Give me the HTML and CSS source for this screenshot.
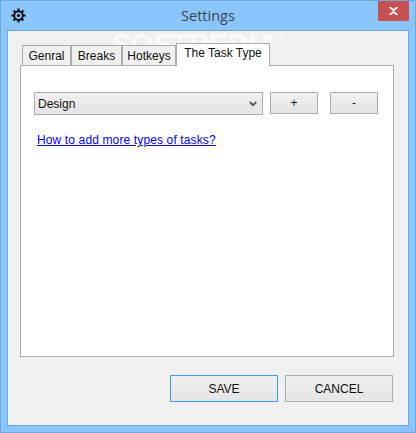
FILE: index.html
```html
<!DOCTYPE html>
<html lang="en">
<head>
<meta charset="utf-8">
<title>Settings</title>
<link rel="stylesheet" href="styles.css">
</head>
<body>
<div class="window">
  <header class="titlebar">
    <svg class="app-icon" viewBox="0 0 16 16" width="15" height="15" aria-hidden="true">
      <g stroke="#0c0c14" stroke-width="2.2">
        <path d="M8 .5V15.5M.5 8H15.5M2.7 2.7 13.3 13.3M13.3 2.7 2.7 13.3"/>
      </g>
      <circle cx="8" cy="8" r="4.6" fill="#8ac6fb" stroke="#0c0c14" stroke-width="2"/>
      <circle cx="8" cy="8" r="1.7" fill="#0c0c14"/>
    </svg>
    <div class="title">Settings</div>
    <div class="close">
      <svg viewBox="0 0 9 8" width="9" height="8" aria-hidden="true"><path d="M.5 0 4.5 3.2 8.5 0M.5 8 4.5 4.8 8.5 8" stroke="#fff" stroke-width="1.8" fill="none"/></svg>
    </div>
  </header>
  <main class="client">
    <div class="watermark"><span>SOFTPEDIA</span><sup class="reg">®</sup></div>
    <nav class="tabs">
      <div class="tab t1">Genral</div>
      <div class="tab t2">Breaks</div>
      <div class="tab t3">Hotkeys</div>
      <div class="tab active">The Task Type</div>
    </nav>
    <section class="panel">
      <div class="row">
        <div class="select">
          <span>Design</span>
          <svg viewBox="0 0 8 6" width="8" height="6" aria-hidden="true"><path d="M.8 1 4 4.2 7.2 1" stroke="#555" stroke-width="1.8" fill="none"/></svg>
        </div>
        <div class="btn small">+</div>
        <div class="btn small minus">-</div>
      </div>
      <a class="link" href="#">How to add more types of tasks?</a>
    </section>
    <footer class="actions">
      <div class="btn large focus">SAVE</div>
      <div class="btn large">CANCEL</div>
    </footer>
  </main>
</div>
</body>
</html>
```
FILE: styles.css
```css
* { box-sizing: border-box; }
html, body { margin: 0; padding: 0; }
body { width: 416px; height: 433px; overflow: hidden; font-family: "Liberation Sans", Arial, sans-serif; }
.window {
  width: 416px; height: 433px;
  background: #8ac6fb;
  border: 1px solid #6fa8dc;
  display: flex; flex-direction: column;
  padding: 0 6px 6px;
}
.titlebar { height: 29px; flex: none; display: flex; align-items: flex-start; position: relative; }
.app-icon { position: absolute; left: 4px; top: 7px; }
.title { flex: 1; text-align: center; font-size: 14.5px; line-height: 17px; margin-top: 6px; color: #3a4552; font-family: "Open Sans", "Liberation Sans", sans-serif; }
.close {
  position: absolute; right: 0; top: 0; width: 31px; height: 20px;
  background: #c75050; display: flex; align-items: center; justify-content: center;
}
.client {
  flex: 1; background: #f0f0f0; border: 1px solid #6fa8dc; position: relative;
  padding: 12px 14px 0 12px; display: flex; flex-direction: column;
}
.watermark {
  position: absolute; left: 104px; top: 0; width: 180px; height: 14px; overflow: hidden;
  font-size: 29px; line-height: 26px; font-weight: 700; color: #fff; opacity: .7; white-space: nowrap;
}
.reg { font-size: 10px; line-height: 10px; font-weight: 400; vertical-align: top; }
.tabs { display: flex; align-items: flex-end; height: 22px; flex: none; position: relative; padding-left: 2px; }
.tab {
  height: 20px; text-align: center; font-size: 12px; line-height: 21px; color: #111;
  background: #f0f0f0; border: 1px solid #acacac; border-bottom: 0; white-space: nowrap;
}
.t1 { width: 49px; }
.t2 { width: 51px; }
.t3 { width: 54px; }
.tab.active {
  width: 94px; height: 23px; background: #fff; margin-bottom: -1px; line-height: 19px; position: relative;
}
.panel {
  height: 292px; flex: none; background: #fff; border: 1px solid #acacac;
  padding: 26px 14px 0 13px;
}
.row { display: flex; align-items: flex-start; height: 23px; }
.select {
  width: 229px; height: 23px; border: 1px solid #acacac;
  background: linear-gradient(#f0f0f0, #e5e5e5);
  display: flex; align-items: center; justify-content: space-between; padding: 0 5px 0 3px;
  font-size: 12px; color: #111;
}
.btn {
  border: 1px solid #acacac; background: linear-gradient(#f0f0f0, #e5e5e5);
  display: flex; align-items: center; justify-content: center; font-size: 12px; color: #111;
}
.btn.small { width: 48px; height: 22px; margin-left: 7px; }
.btn.small.minus { margin-left: 12px; }
.link { display: block; margin: 18px 0 0 3px; font-size: 12px; line-height: 14px; letter-spacing: .13px; color: #0000ff; text-decoration: underline; }
.actions { display: flex; justify-content: flex-end; gap: 7px; margin-top: 18px; padding-right: 1px; }
.btn.large { width: 108px; height: 27px; }
.btn.focus { border-color: #3e9af0; }
```
